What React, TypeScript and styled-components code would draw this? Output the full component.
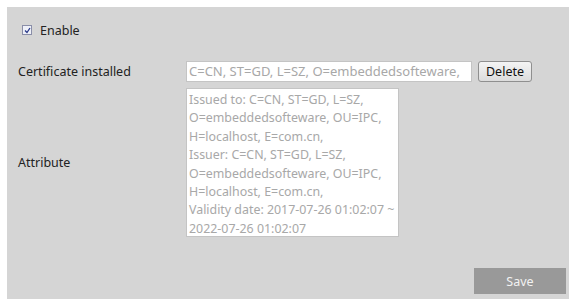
import React from "react";
import styled, { createGlobalStyle } from "styled-components";

const GlobalStyle = createGlobalStyle`
  html, body {
    margin: 0;
    padding: 0;
    background: #ffffff;
  }
  body {
    font-family: "Noto Sans", "Open Sans", sans-serif;
    font-size: 12px;
    color: #222;
  }
`;

const Page = styled.div`
  padding: 7px 9px 8px 7px;
`;

const Panel = styled.div`
  background: #d5d5d5;
  height: 292px;
  box-sizing: border-box;
  padding: 16px 3px 5px 11px;
  display: flex;
  flex-direction: column;
`;

const EnableRow = styled.label`
  display: flex;
  align-items: center;
  gap: 8px;
  height: 14px;
  padding-left: 4px;
  font-size: 12.5px;
`;

const Check = styled.span`
  width: 8px;
  height: 8px;
  border: 1px solid #8a8ea8;
  background: #eef0f8;
  display: flex;
  align-items: center;
  justify-content: center;
`;

const Row = styled.div<{ $top: number }>`
  display: flex;
  align-items: center;
  margin-top: ${(p) => p.$top}px;
`;

const Label = styled.div`
  width: 168px;
  font-size: 12.5px;
  color: #222;
`;

const TextBox = styled.div`
  width: 286px;
  height: 21px;
  box-sizing: border-box;
  background: #fff;
  border: 1px solid #c4c4c4;
  color: #a8a8a8;
  font-size: 13px;
  line-height: 19px;
  padding-left: 2px;
  white-space: nowrap;
  overflow: hidden;
`;

const Button = styled.button`
  margin-left: 6px;
  height: 21px;
  width: 54px;
  box-sizing: border-box;
  border: 1px solid #8f8f8f;
  border-radius: 3px;
  background: linear-gradient(#f4f4f4, #dcdcdc);
  font-family: inherit;
  font-size: 12.5px;
  color: #111;
  padding: 0;
`;

const AttrBox = styled.div`
  width: 213px;
  height: 149px;
  box-sizing: border-box;
  background: #fff;
  border: 1px solid #c4c4c4;
  color: #a8a8a8;
  font-size: 12.4px;
  line-height: 18.4px;
  padding: 2px 2px 0 2px;
  white-space: nowrap;
`;

const Footer = styled.div`
  margin-top: auto;
  display: flex;
  justify-content: flex-end;
`;

const SaveButton = styled.button`
  width: 92px;
  height: 26px;
  border: none;
  background: #999999;
  color: #f2f2f2;
  font-family: inherit;
  font-size: 12.5px;
  padding: 0;
`;

const attrLines = [
  "Issued to: C=CN, ST=GD, L=SZ,",
  "O=embeddedsofteware, OU=IPC,",
  "H=localhost, E=com.cn,",
  "Issuer: C=CN, ST=GD, L=SZ,",
  "O=embeddedsofteware, OU=IPC,",
  "H=localhost, E=com.cn,",
  "Validity date: 2017-07-26 01:02:07 ~",
  "2022-07-26 01:02:07",
];

export default function App() {
  return (
    <>
      <GlobalStyle />
      <Page>
        <Panel>
          <EnableRow>
            <Check>
              <svg width="7" height="7" viewBox="0 0 7 7">
                <path d="M1 3.5 L3 5.5 L6 1" stroke="#2a3a8a" strokeWidth="1.3" fill="none" />
              </svg>
            </Check>
            Enable
          </EnableRow>
          <Row $top={24}>
            <Label>Certificate installed</Label>
            <TextBox>C=CN, ST=GD, L=SZ, O=embeddedsofteware,</TextBox>
            <Button>Delete</Button>
          </Row>
          <Row $top={6}>
            <Label>Attribute</Label>
            <AttrBox>
              {attrLines.map((l, i) => (
                <div key={i}>{l}</div>
              ))}
            </AttrBox>
          </Row>
          <Footer>
            <SaveButton>Save</SaveButton>
          </Footer>
        </Panel>
      </Page>
    </>
  );
}
